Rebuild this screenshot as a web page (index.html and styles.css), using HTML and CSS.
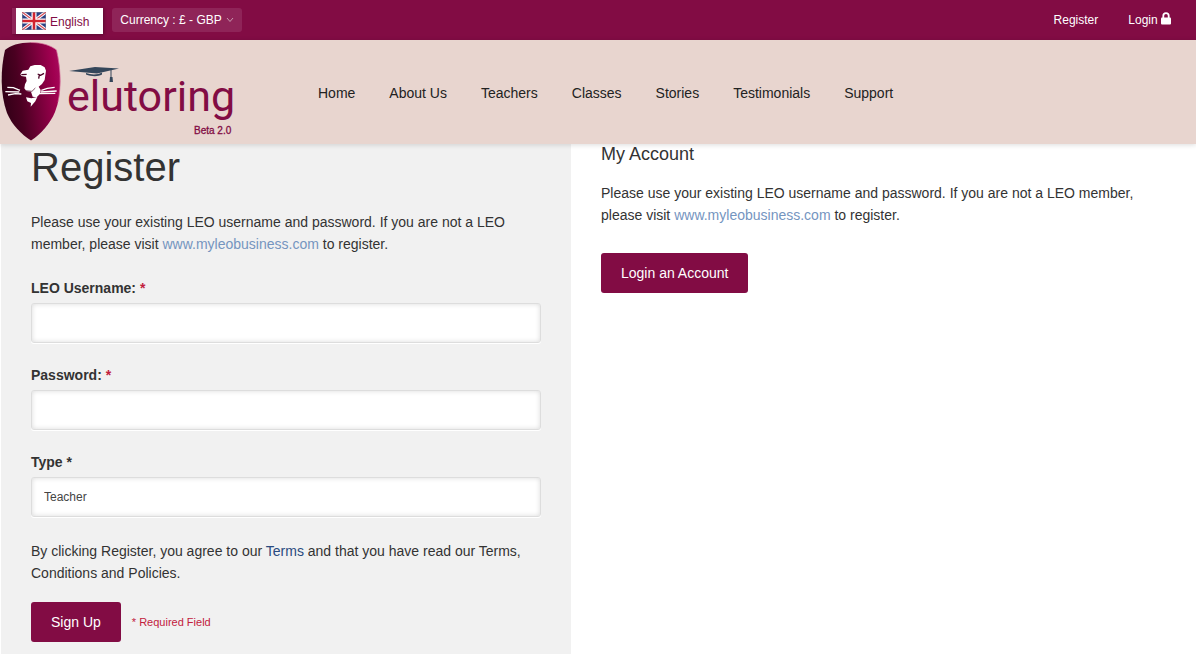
FILE: index.html
```html
<!DOCTYPE html>
<html lang="en">
<head>
<meta charset="utf-8">
<meta name="viewport" content="width=device-width, initial-scale=1">
<title>Register - elutoring</title>
<link rel="stylesheet" href="styles.css">
</head>
<body>
<div class="topbar">
  <div class="topbar-left">
    <button type="button" class="language">
      <svg class="flag" width="24" height="18" viewBox="0 0 24 18" aria-hidden="true">
        <rect width="24" height="18" rx="1" fill="#293f83"/>
        <path d="M0 0L24 18M24 0L0 18" stroke="#fff" stroke-width="3.2"/>
        <path d="M0 0L24 18M24 0L0 18" stroke="#d64a55" stroke-width="1.2"/>
        <path d="M12 0V18M0 9H24" stroke="#fff" stroke-width="5"/>
        <path d="M12 0V18M0 9H24" stroke="#d1242f" stroke-width="2.6"/>
        <rect x=".5" y=".5" width="23" height="17" rx="1" fill="none" stroke="#889" stroke-opacity=".5"/>
      </svg>
      English
    </button>
    <button type="button" class="currency">
      Currency : £ - GBP
      <svg width="8" height="6" viewBox="0 0 8 6" aria-hidden="true"><path d="M1 1L4 4.500L7 1" fill="none" stroke="#c897ae"/></svg>
    </button>
  </div>
  <div class="topbar-right">
    <a href="#register">Register</a>
    <a href="#login">Login
      <svg width="10" height="13" viewBox="0 0 10 13" aria-hidden="true"><path d="M2.3 6V3.8a2.7 2.7 0 0 1 5.4 0V6" fill="none" stroke="#fff" stroke-width="1.8"/><rect y="5.5" width="10" height="7" rx="1" fill="#fff"/></svg>
    </a>
  </div>
</div>

<header class="header">
  <a href="#home" class="logo" aria-label="elutoring Beta 2.0">
    <svg width="240" height="104" viewBox="0 0 240 104">
      <defs>
        <linearGradient id="shield" x1="0" y1=".55" x2="1" y2=".35">
          <stop offset="0" stop-color="#310016"/>
          <stop offset=".3" stop-color="#4a0021"/>
          <stop offset=".9" stop-color="#a00050"/>
          <stop offset="1" stop-color="#a5085a"/>
        </linearGradient>
      </defs>
      <path d="M31 2.500C42 2.500 51 5.500 56.500 10C61 29 62.500 53 55 72C50 84 41 94 31 100.500C21 94 12 85 7 73C0 54 .5 29 5 10C10 5.500 19 2.500 31 2.500Z" fill="url(#shield)"/>
      <path d="M31 2.500C42 2.500 51 5.500 56.500 10C60.500 28 61.500 45 58 62" fill="none" stroke="#d8749c" stroke-width="1" opacity=".7"/>
      <g transform="translate(0 -2) scale(.3333)">
        <path d="M61 109L68 98L85 95L91 85L104 81L122 81L134 88L138 98L136 112L134 126L126 138L116 146L122 156L120 168L110 178L98 176L93 161L79 159L73 151L75 139L80 129L78 116L64 114Z" fill="#fff"/>
        <path d="M64 110L80 109M113 108L122 112L132 106M118 111L116 122" fill="none" stroke="#4a0024" stroke-width="4"/>
        <path d="M78 158L96 160L106 150" fill="none" stroke="#4a0024" stroke-width="2"/>
        <path d="M22 148L40 149L60 157M16 161L58 162M24 171L46 167L64 168M124 157L142 151L164 148M122 162L170 159M120 167L166 166" fill="none" stroke="#fff" stroke-width="4"/>
        <path d="M78 178L94 181L112 177L106 190L92 206L93 195L82 190Z" fill="#fff"/>
      </g>
      <text class="wordmark" x="67" y="71">elutoring</text>
      <path d="M69 31L95 27L119 28.500L97 33.500Z" fill="#34465a"/>
      <path d="M86 33C91 35 98 35 102 32.500V34.500C98 37 91 36.500 86 34.500Z" fill="#34465a"/>
      <path d="M111 30V38" stroke="#34465a" stroke-width="1"/>
      <path d="M110 37H112.500L113 42H109.500Z" fill="#34465a"/>
      <text class="version" x="194" y="94">Beta 2.0</text>
    </svg>
  </a>
  <nav class="nav" aria-label="Main">
    <a href="#home">Home</a>
    <a href="#about">About Us</a>
    <a href="#teachers">Teachers</a>
    <a href="#classes">Classes</a>
    <a href="#stories">Stories</a>
    <a href="#testimonials">Testimonials</a>
    <a href="#support">Support</a>
  </nav>
</header>

<main class="content">
  <form class="register">
    <h1>Register</h1>
    <p class="intro">Please use your existing LEO username and password. If you are not a LEO member, please visit <a class="site" href="#leo">www.myleobusiness.com</a> to register.</p>
    <div class="field">
      <label for="username">LEO Username: <span class="required">*</span></label>
      <input id="username" type="text">
    </div>
    <div class="field">
      <label for="password">Password: <span class="required">*</span></label>
      <input id="password" type="password">
    </div>
    <div class="field">
      <label for="type">Type *</label>
      <select id="type"><option>Teacher</option><option>Student</option></select>
    </div>
    <p class="terms">By clicking Register, you agree to our <a href="#terms">Terms</a> and that you have read our Terms, Conditions and Policies.</p>
    <div class="actions">
      <button type="submit" class="button">Sign Up</button>
      <span class="note">* Required Field</span>
    </div>
  </form>
  <section class="account">
    <h2>My Account</h2>
    <p>Please use your existing LEO username and password. If you are not a LEO member, please visit <a class="site" href="#leo">www.myleobusiness.com</a> to register.</p>
    <a class="button" href="#login">Login an Account</a>
  </section>
</main>
</body>
</html>
```
FILE: styles.css
```css
* { box-sizing: border-box; }

body {
  margin: 0;
  min-height: 100vh;
  display: flex;
  flex-direction: column;
  background: #fff;
  color: #333;
  font: 14px/22px "Liberation Sans", Arial, sans-serif;
}

h1, h2, p { margin: 0; font-weight: 400; }
a { color: #2a4b80; text-decoration: none; }
button, input, select { font-family: inherit; }

.topbar {
  display: flex;
  justify-content: space-between;
  align-items: center;
  height: 40px;
  padding: 0 25px 0 12px;
  background: #820c44;
  font-size: 12px;
}
.topbar-left { display: flex; gap: 9px; }
.language {
  display: flex;
  align-items: center;
  gap: 4px;
  height: 26px;
  margin-bottom: -2px;
  padding: 2px 14px 0 6px;
  border: 0;
  border-left: 4px solid #8f2458;
  background: #fff;
  background-clip: padding-box;
  box-shadow: 1px 1px 3px rgba(0, 0, 0, .3);
  color: #820c44;
  font-size: 12px;
}
.flag { margin-top: -3px; }
.currency {
  display: flex;
  align-items: center;
  gap: 4px;
  height: 24px;
  padding: 0 8px;
  border: 0;
  border-radius: 3px;
  background: #8f2458;
  color: #fff;
  font-size: 12px;
}
.topbar-right { display: flex; gap: 30px; }
.topbar-right a { color: #fff; }
.topbar-right svg { vertical-align: -1px; }

.header {
  position: relative;
  display: flex;
  align-items: center;
  gap: 78px;
  background: #e8d5cf;
  box-shadow: 0 1px 5px rgba(0, 0, 0, .14);
}
.logo svg { display: block; }
.wordmark { font: 43px Roboto, sans-serif; fill: #820c44; }
.version { font: 10px "Liberation Sans", Arial, sans-serif; fill: #820c44; stroke: #820c44; stroke-width: .3px; }
.nav { display: flex; gap: 34px; padding-top: 2px; }
.nav a { color: #222; }

.content {
  flex: 1;
  display: grid;
  grid-template-columns: 1fr 1fr;
  padding: 0 55px 0 1px;
}
.register { padding: 1px 30px 12px; background: #f1f1f1; }
h1 { font-size: 40px; line-height: 44px; }
.intro { margin: 22px 0; }
.field { display: flex; flex-direction: column; gap: 4px; margin-bottom: 21px; }
.field label { font-weight: 700; }
.required { color: #c2203d; }
.field input,
.field select {
  appearance: none;
  width: 100%;
  height: 40px;
  padding: 0 12px;
  border: 1px solid #ddd;
  border-radius: 3px;
  background: #fff;
  box-shadow: inset 0 0 5px rgba(0, 0, 0, .15), 0 1px 0 #fff;
  color: #444;
  font-size: 12px;
}
.terms { margin: 23px 0 18px; }
.actions { display: flex; align-items: center; gap: 11px; }
.button {
  display: inline-block;
  height: 40px;
  padding: 0 20px;
  border: 0;
  border-radius: 3px;
  background: #820c44;
  color: #fff;
  font-size: 14px;
  line-height: 40px;
}
.note { color: #c2203d; font-size: 11px; }

.account { padding: 0 0 0 30px; }
h2 { font-size: 18px; line-height: 20px; }
.account p { margin: 18px 0 27px; }
.site { color: #7595bf; }
```
